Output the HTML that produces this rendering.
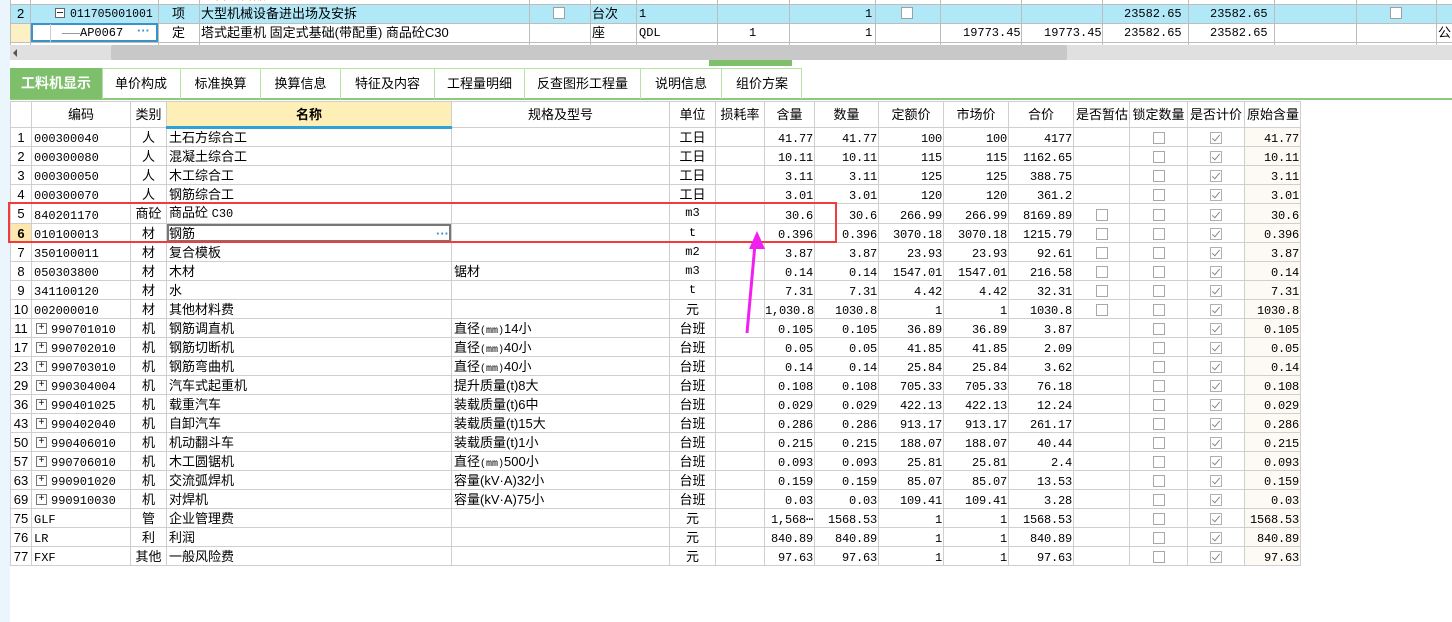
<!DOCTYPE html>
<html><head><meta charset="utf-8"><style>
*{margin:0;padding:0;box-sizing:border-box}
body{width:1452px;height:622px;overflow:hidden;background:#fff;position:relative;font-family:"Liberation Sans","Noto Sans CJK SC",sans-serif;font-size:13px;color:#000}
.ab{position:absolute}
.mono{font-family:"Liberation Mono","Noto Sans CJK SC",monospace;font-size:12px}
.vl{position:absolute;width:1px;background:#bdbdbd}
.hl{position:absolute;height:1px;background:#bdbdbd}
.t{position:absolute;white-space:nowrap;line-height:19px;height:19px}
.cb{position:absolute;width:12px;height:12px;border:1px solid #a0a0a0;background:#fff}
table{position:absolute;left:10px;top:101px;border-collapse:collapse;table-layout:fixed;width:1290px}
tr{height:19px}
td,th{border:1px solid #cfcfcf;height:19px;padding:0 2px;white-space:nowrap;overflow:hidden;line-height:17px;font-weight:normal;vertical-align:middle}
th{height:26px;font-size:13px}
td.n{text-align:right;font-family:"Liberation Mono",monospace;font-size:12px;line-height:14px;padding:4px 1px 0 0;letter-spacing:-0.2px}
td.c{text-align:center}
td.code{font-family:"Liberation Mono",monospace;font-size:12px;line-height:14px;padding-top:4px}
td.o{background:#fdf9f3}
.bx{display:inline-block;width:12px;height:12px;border:1px solid #a8a8a8;vertical-align:middle;background:#fff}
.ck{display:inline-block;width:12px;height:12px;border:1px solid #b0b0b0;vertical-align:middle;position:relative;background:#fff}
.ck:after{content:"";position:absolute;left:3px;top:0px;width:3px;height:7px;border:solid #888;border-width:0 1px 1px 0;transform:rotate(40deg)}
.pl{display:inline-block;width:11px;height:11px;border:1px solid #777;font-size:10px;line-height:9px;text-align:center;vertical-align:top;margin:0 4px 0 2px;font-family:"Liberation Mono",monospace}
.sp{font-family:"Liberation Mono",monospace;font-size:10px;line-height:0}
</style></head><body>
<div class="ab" style="left:0;top:0;width:10px;height:622px;background:#eaf5fc"></div>

<!-- top table -->
<div class="ab" style="left:10px;top:4px;width:1442px;height:19px;background:#b0e8f8"></div>
<div class="ab" style="left:10px;top:23px;width:20px;height:19px;background:#fdf0c4"></div>
<div class="hl" style="left:10px;top:4px;width:1442px"></div>
<div class="hl" style="left:10px;top:23px;width:1442px"></div>
<div class="hl" style="left:10px;top:42px;width:1442px"></div>
<div class="vl" style="left:10px;top:0;height:45px"></div>
<div class="vl" style="left:30px;top:0;height:45px"></div>
<div class="vl" style="left:158px;top:0;height:45px"></div>
<div class="vl" style="left:199px;top:0;height:45px"></div>
<div class="vl" style="left:529px;top:0;height:45px"></div>
<div class="vl" style="left:590px;top:0;height:45px"></div>
<div class="vl" style="left:636px;top:0;height:45px"></div>
<div class="vl" style="left:717px;top:0;height:45px"></div>
<div class="vl" style="left:789px;top:0;height:45px"></div>
<div class="vl" style="left:875px;top:0;height:45px"></div>
<div class="vl" style="left:940px;top:0;height:45px"></div>
<div class="vl" style="left:1021px;top:0;height:45px"></div>
<div class="vl" style="left:1102px;top:0;height:45px"></div>
<div class="vl" style="left:1188px;top:0;height:45px"></div>
<div class="vl" style="left:1274px;top:0;height:45px"></div>
<div class="vl" style="left:1356px;top:0;height:45px"></div>
<div class="vl" style="left:1436px;top:0;height:45px"></div>
<div class="t" style="left:201px;top:-15px">材料设备品砼</div>
<div class="t" style="left:17px;top:4px">2</div>
<div class="ab" style="left:55px;top:8px;width:10px;height:10px;border:1px solid #666;background:#fff"><div class="ab" style="left:1px;top:3px;width:6px;height:1px;background:#333"></div></div>
<div class="t mono" style="left:70px;top:5px;font-size:11.5px">011705001001</div>
<div class="t" style="left:172px;top:4px">项</div>
<div class="t" style="left:201px;top:4px">大型机械设备进出场及安拆</div>
<div class="cb" style="left:553px;top:7px"></div>
<div class="t" style="left:592px;top:4px">台次</div>
<div class="t mono" style="left:639px;top:5px">1</div>
<div class="t mono" style="left:865px;top:5px">1</div>
<div class="cb" style="left:901px;top:7px"></div>
<div class="t mono" style="left:1124px;top:5px">23582.65</div>
<div class="t mono" style="left:1210px;top:5px">23582.65</div>
<div class="cb" style="left:1390px;top:7px"></div>
<div class="ab" style="left:31px;top:23px;width:127px;height:19px;border:2px solid #3a93c8;background:#fff"></div>
<div class="ab" style="left:62px;top:33px;width:18px;height:1px;background:#999"></div>
<div class="vl" style="left:50px;top:24px;height:18px;background:#ccc"></div>
<div class="t mono" style="left:80px;top:24px">AP0067</div>
<div class="t" style="left:137px;top:21px;color:#3a8fd0;font-weight:bold">···</div>
<div class="t" style="left:172px;top:23px">定</div>
<div class="t" style="left:201px;top:23px">塔式起重机 固定式基础(带配重) 商品砼C30</div>
<div class="t" style="left:592px;top:23px">座</div>
<div class="t mono" style="left:639px;top:24px">QDL</div>
<div class="t mono" style="left:749px;top:24px">1</div>
<div class="t mono" style="left:865px;top:24px">1</div>
<div class="t mono" style="left:963px;top:24px">19773.45</div>
<div class="t mono" style="left:1044px;top:24px">19773.45</div>
<div class="t mono" style="left:1124px;top:24px">23582.65</div>
<div class="t mono" style="left:1210px;top:24px">23582.65</div>
<div class="t" style="left:1438px;top:23px">公</div>

<!-- scrollbar -->
<div class="ab" style="left:10px;top:45px;width:1442px;height:15px;background:#e0e0e0"></div>
<div class="ab" style="left:13px;top:49px;width:0;height:0;border-top:4px solid transparent;border-bottom:4px solid transparent;border-right:4px solid #555"></div>
<div class="ab" style="left:111px;top:45px;width:956px;height:15px;background:#c8c8c8;border-radius:2px"></div>
<div class="ab" style="left:709px;top:60px;width:83px;height:6px;background:#7dbf6a"></div>

<!-- tabs -->
<div class="ab" style="left:10px;top:98px;width:1442px;height:2px;background:#8cc97a"></div>
<div class="ab" style="left:10px;top:68px;width:92px;height:31px;background:#7dbf6a;color:#fff;font-weight:bold;font-size:14px;line-height:31px;text-align:center">工料机显示</div>
<div class="ab" style="left:102px;top:68px;width:700px;height:31px;border:1px solid #b9e0a8;border-bottom:none"></div>
<div class="ab" style="left:102px;top:68px;width:79px;height:31px;line-height:31px;text-align:center;border-right:1px solid #b9e0a8">单价构成</div>
<div class="ab" style="left:181px;top:68px;width:80px;height:31px;line-height:31px;text-align:center;border-right:1px solid #b9e0a8">标准换算</div>
<div class="ab" style="left:261px;top:68px;width:80px;height:31px;line-height:31px;text-align:center;border-right:1px solid #b9e0a8">换算信息</div>
<div class="ab" style="left:341px;top:68px;width:94px;height:31px;line-height:31px;text-align:center;border-right:1px solid #b9e0a8">特征及内容</div>
<div class="ab" style="left:435px;top:68px;width:90px;height:31px;line-height:31px;text-align:center;border-right:1px solid #b9e0a8">工程量明细</div>
<div class="ab" style="left:525px;top:68px;width:116px;height:31px;line-height:31px;text-align:center;border-right:1px solid #b9e0a8">反查图形工程量</div>
<div class="ab" style="left:641px;top:68px;width:81px;height:31px;line-height:31px;text-align:center;border-right:1px solid #b9e0a8">说明信息</div>
<div class="ab" style="left:722px;top:68px;width:80px;height:31px;line-height:31px;text-align:center">组价方案</div>

<table>
<colgroup><col style="width:21px"><col style="width:99px"><col style="width:36px"><col style="width:285px"><col style="width:218px"><col style="width:46px"><col style="width:49px"><col style="width:50px"><col style="width:64px"><col style="width:65px"><col style="width:65px"><col style="width:65px"><col style="width:56px"><col style="width:58px"><col style="width:57px"><col style="width:56px"></colgroup>
<tr style="height:26px"><th></th><th>编码</th><th>类别</th><th style="background:#feefb6;font-weight:bold;border-bottom:3px solid #2fa3d8">名称</th><th>规格及型号</th><th>单位</th><th>损耗率</th><th>含量</th><th>数量</th><th>定额价</th><th>市场价</th><th>合价</th><th>是否暂估</th><th>锁定数量</th><th>是否计价</th><th>原始含量</th></tr>
<tr><td class="c">1</td><td class="code">000300040</td><td class="c">人</td><td>土石方综合工</td><td></td><td class="c">工日</td><td></td><td class="n">41.77</td><td class="n">41.77</td><td class="n">100</td><td class="n">100</td><td class="n">4177</td><td></td><td class="c"><span class="bx"></span></td><td class="c"><span class="ck"></span></td><td class="n o">41.77</td></tr>
<tr><td class="c">2</td><td class="code">000300080</td><td class="c">人</td><td>混凝土综合工</td><td></td><td class="c">工日</td><td></td><td class="n">10.11</td><td class="n">10.11</td><td class="n">115</td><td class="n">115</td><td class="n">1162.65</td><td></td><td class="c"><span class="bx"></span></td><td class="c"><span class="ck"></span></td><td class="n o">10.11</td></tr>
<tr><td class="c">3</td><td class="code">000300050</td><td class="c">人</td><td>木工综合工</td><td></td><td class="c">工日</td><td></td><td class="n">3.11</td><td class="n">3.11</td><td class="n">125</td><td class="n">125</td><td class="n">388.75</td><td></td><td class="c"><span class="bx"></span></td><td class="c"><span class="ck"></span></td><td class="n o">3.11</td></tr>
<tr><td class="c">4</td><td class="code">000300070</td><td class="c">人</td><td>钢筋综合工</td><td></td><td class="c">工日</td><td></td><td class="n">3.01</td><td class="n">3.01</td><td class="n">120</td><td class="n">120</td><td class="n">361.2</td><td></td><td class="c"><span class="bx"></span></td><td class="c"><span class="ck"></span></td><td class="n o">3.01</td></tr>
<tr><td class="c">5</td><td class="code">840201170</td><td class="c">商砼</td><td>商品砼 <span class="mono">C30</span></td><td></td><td class="c mono">m3</td><td></td><td class="n">30.6</td><td class="n">30.6</td><td class="n">266.99</td><td class="n">266.99</td><td class="n">8169.89</td><td class="c"><span class="bx"></span></td><td class="c"><span class="bx"></span></td><td class="c"><span class="ck"></span></td><td class="n o">30.6</td></tr>
<tr><td class="c" style="background:#fde7ae;font-weight:bold">6</td><td class="code">010100013</td><td class="c">材</td><td style="box-shadow:inset 0 0 0 2px #777">钢筋<span style="float:right;color:#3a8fd0;font-weight:bold">···</span></td><td></td><td class="c mono">t</td><td></td><td class="n">0.396</td><td class="n">0.396</td><td class="n">3070.18</td><td class="n">3070.18</td><td class="n">1215.79</td><td class="c"><span class="bx"></span></td><td class="c"><span class="bx"></span></td><td class="c"><span class="ck"></span></td><td class="n o">0.396</td></tr>
<tr><td class="c">7</td><td class="code">350100011</td><td class="c">材</td><td>复合模板</td><td></td><td class="c mono">m2</td><td></td><td class="n">3.87</td><td class="n">3.87</td><td class="n">23.93</td><td class="n">23.93</td><td class="n">92.61</td><td class="c"><span class="bx"></span></td><td class="c"><span class="bx"></span></td><td class="c"><span class="ck"></span></td><td class="n o">3.87</td></tr>
<tr><td class="c">8</td><td class="code">050303800</td><td class="c">材</td><td>木材</td><td>锯材</td><td class="c mono">m3</td><td></td><td class="n">0.14</td><td class="n">0.14</td><td class="n">1547.01</td><td class="n">1547.01</td><td class="n">216.58</td><td class="c"><span class="bx"></span></td><td class="c"><span class="bx"></span></td><td class="c"><span class="ck"></span></td><td class="n o">0.14</td></tr>
<tr><td class="c">9</td><td class="code">341100120</td><td class="c">材</td><td>水</td><td></td><td class="c mono">t</td><td></td><td class="n">7.31</td><td class="n">7.31</td><td class="n">4.42</td><td class="n">4.42</td><td class="n">32.31</td><td class="c"><span class="bx"></span></td><td class="c"><span class="bx"></span></td><td class="c"><span class="ck"></span></td><td class="n o">7.31</td></tr>
<tr><td class="c">10</td><td class="code">002000010</td><td class="c">材</td><td>其他材料费</td><td></td><td class="c">元</td><td></td><td class="n">1,030.8</td><td class="n">1030.8</td><td class="n">1</td><td class="n">1</td><td class="n">1030.8</td><td class="c"><span class="bx"></span></td><td class="c"><span class="bx"></span></td><td class="c"><span class="ck"></span></td><td class="n o">1030.8</td></tr>
<tr><td class="c">11</td><td class="code"><span class="pl">+</span>990701010</td><td class="c">机</td><td>钢筋调直机</td><td>直径<span class="sp">(mm)</span>14小</td><td class="c">台班</td><td></td><td class="n">0.105</td><td class="n">0.105</td><td class="n">36.89</td><td class="n">36.89</td><td class="n">3.87</td><td></td><td class="c"><span class="bx"></span></td><td class="c"><span class="ck"></span></td><td class="n o">0.105</td></tr>
<tr><td class="c">17</td><td class="code"><span class="pl">+</span>990702010</td><td class="c">机</td><td>钢筋切断机</td><td>直径<span class="sp">(mm)</span>40小</td><td class="c">台班</td><td></td><td class="n">0.05</td><td class="n">0.05</td><td class="n">41.85</td><td class="n">41.85</td><td class="n">2.09</td><td></td><td class="c"><span class="bx"></span></td><td class="c"><span class="ck"></span></td><td class="n o">0.05</td></tr>
<tr><td class="c">23</td><td class="code"><span class="pl">+</span>990703010</td><td class="c">机</td><td>钢筋弯曲机</td><td>直径<span class="sp">(mm)</span>40小</td><td class="c">台班</td><td></td><td class="n">0.14</td><td class="n">0.14</td><td class="n">25.84</td><td class="n">25.84</td><td class="n">3.62</td><td></td><td class="c"><span class="bx"></span></td><td class="c"><span class="ck"></span></td><td class="n o">0.14</td></tr>
<tr><td class="c">29</td><td class="code"><span class="pl">+</span>990304004</td><td class="c">机</td><td>汽车式起重机</td><td>提升质量(t)8大</td><td class="c">台班</td><td></td><td class="n">0.108</td><td class="n">0.108</td><td class="n">705.33</td><td class="n">705.33</td><td class="n">76.18</td><td></td><td class="c"><span class="bx"></span></td><td class="c"><span class="ck"></span></td><td class="n o">0.108</td></tr>
<tr><td class="c">36</td><td class="code"><span class="pl">+</span>990401025</td><td class="c">机</td><td>载重汽车</td><td>装载质量(t)6中</td><td class="c">台班</td><td></td><td class="n">0.029</td><td class="n">0.029</td><td class="n">422.13</td><td class="n">422.13</td><td class="n">12.24</td><td></td><td class="c"><span class="bx"></span></td><td class="c"><span class="ck"></span></td><td class="n o">0.029</td></tr>
<tr><td class="c">43</td><td class="code"><span class="pl">+</span>990402040</td><td class="c">机</td><td>自卸汽车</td><td>装载质量(t)15大</td><td class="c">台班</td><td></td><td class="n">0.286</td><td class="n">0.286</td><td class="n">913.17</td><td class="n">913.17</td><td class="n">261.17</td><td></td><td class="c"><span class="bx"></span></td><td class="c"><span class="ck"></span></td><td class="n o">0.286</td></tr>
<tr><td class="c">50</td><td class="code"><span class="pl">+</span>990406010</td><td class="c">机</td><td>机动翻斗车</td><td>装载质量(t)1小</td><td class="c">台班</td><td></td><td class="n">0.215</td><td class="n">0.215</td><td class="n">188.07</td><td class="n">188.07</td><td class="n">40.44</td><td></td><td class="c"><span class="bx"></span></td><td class="c"><span class="ck"></span></td><td class="n o">0.215</td></tr>
<tr><td class="c">57</td><td class="code"><span class="pl">+</span>990706010</td><td class="c">机</td><td>木工圆锯机</td><td>直径<span class="sp">(mm)</span>500小</td><td class="c">台班</td><td></td><td class="n">0.093</td><td class="n">0.093</td><td class="n">25.81</td><td class="n">25.81</td><td class="n">2.4</td><td></td><td class="c"><span class="bx"></span></td><td class="c"><span class="ck"></span></td><td class="n o">0.093</td></tr>
<tr><td class="c">63</td><td class="code"><span class="pl">+</span>990901020</td><td class="c">机</td><td>交流弧焊机</td><td>容量(kV·A)32小</td><td class="c">台班</td><td></td><td class="n">0.159</td><td class="n">0.159</td><td class="n">85.07</td><td class="n">85.07</td><td class="n">13.53</td><td></td><td class="c"><span class="bx"></span></td><td class="c"><span class="ck"></span></td><td class="n o">0.159</td></tr>
<tr><td class="c">69</td><td class="code"><span class="pl">+</span>990910030</td><td class="c">机</td><td>对焊机</td><td>容量(kV·A)75小</td><td class="c">台班</td><td></td><td class="n">0.03</td><td class="n">0.03</td><td class="n">109.41</td><td class="n">109.41</td><td class="n">3.28</td><td></td><td class="c"><span class="bx"></span></td><td class="c"><span class="ck"></span></td><td class="n o">0.03</td></tr>
<tr><td class="c">75</td><td class="code">GLF</td><td class="c">管</td><td>企业管理费</td><td></td><td class="c">元</td><td></td><td class="n">1,568⋯</td><td class="n">1568.53</td><td class="n">1</td><td class="n">1</td><td class="n">1568.53</td><td></td><td class="c"><span class="bx"></span></td><td class="c"><span class="ck"></span></td><td class="n o">1568.53</td></tr>
<tr><td class="c">76</td><td class="code">LR</td><td class="c">利</td><td>利润</td><td></td><td class="c">元</td><td></td><td class="n">840.89</td><td class="n">840.89</td><td class="n">1</td><td class="n">1</td><td class="n">840.89</td><td></td><td class="c"><span class="bx"></span></td><td class="c"><span class="ck"></span></td><td class="n o">840.89</td></tr>
<tr><td class="c">77</td><td class="code">FXF</td><td class="c">其他</td><td>一般风险费</td><td></td><td class="c">元</td><td></td><td class="n">97.63</td><td class="n">97.63</td><td class="n">1</td><td class="n">1</td><td class="n">97.63</td><td></td><td class="c"><span class="bx"></span></td><td class="c"><span class="ck"></span></td><td class="n o">97.63</td></tr>
</table>

<!-- red box -->
<div class="ab" style="left:8px;top:202px;width:829px;height:41px;border:2px solid #f23c3c"></div>
<!-- arrow -->
<svg class="ab" style="left:0;top:0" width="1452" height="622"><line x1="747" y1="333" x2="755" y2="244" stroke="#f020f0" stroke-width="3"/><polygon points="757,231 749,249 765,249" fill="#f020f0"/></svg>
</body></html>
